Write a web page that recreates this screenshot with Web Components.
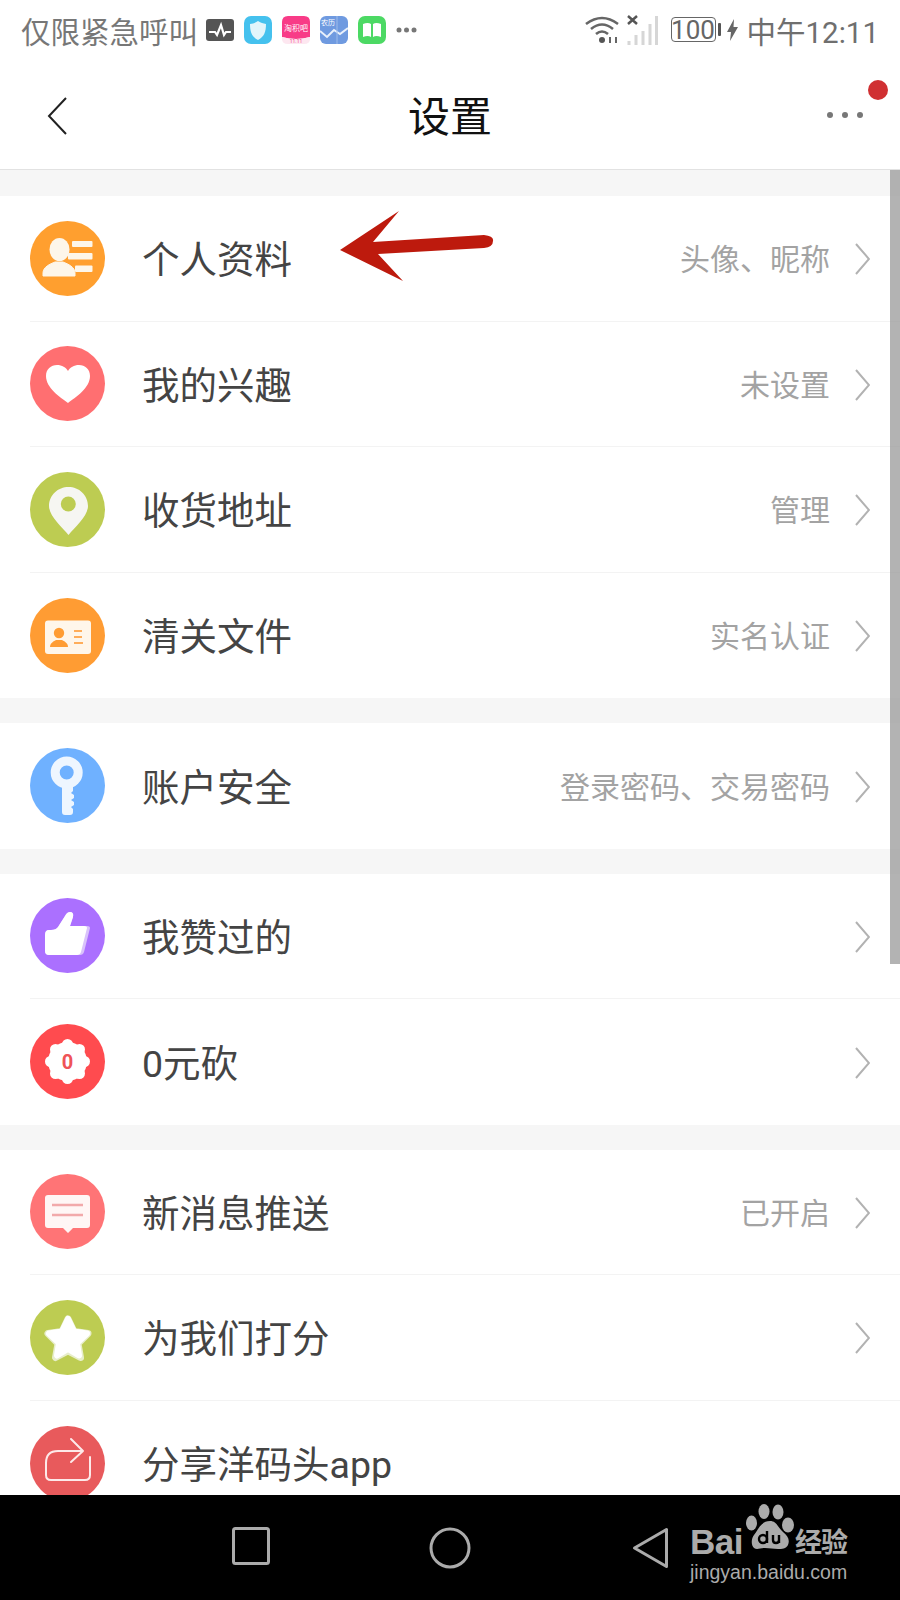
<!DOCTYPE html>
<html lang="zh">
<head>
<meta charset="utf-8">
<title>设置</title>
<style>
  html, body { margin: 0; padding: 0; background: #fff; }
  body { font-family: "Roboto", "Noto Sans CJK SC", sans-serif; }
</style>
</head>
<body>
<phone-app>
  <status-bar></status-bar>
  <nav-bar>设置</nav-bar>
  <settings-list>
    <settings-group>
      <settings-row icon="profile" note="头像、昵称">个人资料</settings-row>
      <settings-row icon="heart" note="未设置">我的兴趣</settings-row>
      <settings-row icon="pin" note="管理">收货地址</settings-row>
      <settings-row icon="card" note="实名认证">清关文件</settings-row>
    </settings-group>
    <settings-group>
      <settings-row icon="key" note="登录密码、交易密码">账户安全</settings-row>
    </settings-group>
    <settings-group>
      <settings-row icon="thumb">我赞过的</settings-row>
      <settings-row icon="zero">0元砍</settings-row>
    </settings-group>
    <settings-group>
      <settings-row icon="message" note="已开启">新消息推送</settings-row>
      <settings-row icon="star">为我们打分</settings-row>
      <settings-row icon="share" plain>分享洋码头app</settings-row>
    </settings-group>
  </settings-list>
  <bottom-nav></bottom-nav>
</phone-app>

<script>
const CJK = '"Roboto", "Noto Sans CJK SC", sans-serif';

// all icons are drawn on a 75x75 box, coords measured from the screenshot
const ICONS = {
  profile: { bg: '#ff9f2f', svg: `
    <ellipse cx="29.5" cy="28.5" rx="10" ry="11.5" fill="#fdf6ea"/>
    <path d="M13 55v-3c0-6 7-9 12-11h8c5 2 12 5 12 11v3z" fill="#fdf6ea" stroke="#fdf6ea" stroke-width="1" stroke-linejoin="round"/>
    <rect x="42" y="20" width="20.500" height="6" rx="1" fill="#fdf6ea"/>
    <rect x="38" y="32" width="24.500" height="6.500" rx="1" fill="#fdf6ea"/>
    <rect x="45" y="44.500" width="17.500" height="6.500" rx="1" fill="#fdf6ea"/>` },
  heart: { bg: '#ff6f71', svg: `
    <path d="M38 57C30 51 16 42 16 30c0-7 5-11 11-11 5 0 9 2.500 11 6 2-3.500 6-6 11-6 6 0 11 4 11 11 0 12-14 21-22 27z" fill="#fff"/>` },
  pin: { bg: '#bdcc52', svg: `
    <path d="M38.500 63C32 55 19 44 19 34c0-11 9-19 19.500-19S58 23 58 34c0 10-13 21-19.500 29z" fill="#f6f6f2"/>
    <circle cx="38.300" cy="32" r="7.500" fill="#bdcc52"/>` },
  card: { bg: '#ff9c33', svg: `
    <rect x="15" y="22.500" width="46" height="33.500" rx="3" fill="#fff6ea"/>
    <circle cx="29" cy="35" r="5.200" fill="#ff9c33"/>
    <path d="M20 49c0-4 4-6 6-7h6c2 1 6 3 6 7z" fill="#ff9c33"/>
    <path d="M44 33h8M44 39h8M44 45h9" stroke="#ffad5a" stroke-width="1.800"/>` },
  key: { bg: '#6fb1ff', svg: `
    <path d="M32 38v26q0 3 3 3h5q3 0 3-3v-3l-2-2 3-2v-3l-3-2 3-2v-3l-3-2 2-2v-7.500z" fill="#eef6ff"/>
    <circle cx="36.700" cy="24.500" r="11.500" fill="none" stroke="#eef6ff" stroke-width="9"/>` },
  thumb: { bg: '#ab70ff', svg: `
    <path d="M15 37v16q0 4 4 4h31q3 0 4-3l6-24q0-2-3-2H40l3-9q1-5-3-5-3 0-5 4l-7 11q-2 3-7 3h-2q-4 0-4 5z" fill="#d9c2fb"/>
    <path d="M15 37v16q0 4 4 4h28q3 0 4-3l6-24q0-2-3-2H40l3-9q1-5-3-5-3 0-5 4l-7 11q-2 3-7 3h-2q-4 0-4 5z" fill="#fff"/>` },
  zero: { bg: '#ff4b4f', svg: `
    <g fill="#fff"><circle cx="37.500" cy="37.500" r="19.500"/>
    <circle cx="37.500" cy="20.500" r="5.500"/><circle cx="37.500" cy="54.500" r="5.500"/><circle cx="20.500" cy="37.500" r="5.500"/><circle cx="54.500" cy="37.500" r="5.500"/>
    <circle cx="25.500" cy="25.500" r="5.500"/><circle cx="49.500" cy="25.500" r="5.500"/><circle cx="25.500" cy="49.500" r="5.500"/><circle cx="49.500" cy="49.500" r="5.500"/></g>
    <text x="37.500" y="44.500" text-anchor="middle" font-family="Roboto, sans-serif" font-weight="700" font-size="20" fill="#ef5357">0</text>` },
  message: { bg: '#ff7476', svg: `
    <path d="M18 21h39q3 0 3 3v27q0 3-3 3H43l-5 5-5-5H18q-3 0-3-3V24q0-3 3-3z" fill="#fff6f5"/>
    <path d="M22 31h31M22 41h31" stroke="#f2a9aa" stroke-width="2.500"/>` },
  star: { bg: '#bdcc52', svg: `
    <path d="M38 19l6 12.500 14 2-10 10 2.500 14L38 51l-12.500 6.500L28 43.500l-10-10 14-2z" fill="#e8eecb" stroke="#e8eecb" stroke-width="7" stroke-linejoin="round"/>
    <path d="M38 19l6 12.500 13 2-10 9.500 2 12.500L38 49l-11 6.500 2-12.500-10-9.500 13-2z" fill="#fff" stroke="#fff" stroke-width="6" stroke-linejoin="round"/>` },
  share: { bg: '#e85a5c', svg: `
    <path d="M41 13l12 12-12 11M53 25H28q-12 0-12 12v12q0 5 5 5h34q5 0 5-5V31" fill="none" stroke="#fde9e9" stroke-width="2" stroke-linecap="round" stroke-linejoin="round"/>` }
};

class PhoneApp extends HTMLElement {
  constructor() {
    super();
    this.attachShadow({ mode: 'open' }).innerHTML = `
      <style>
        :host { display: flex; flex-direction: column; width: 900px; height: 1600px; position: relative; overflow: hidden; background: #fff; font-family: ${CJK}; }
        .arrow { position: absolute; left: 330px; top: 205px; }
      </style>
      <slot></slot>
      <svg class="arrow" width="170" height="85" viewBox="330 205 170 85">
        <path d="M340 250L399 211 373 242 484 235Q494 236 493 241 493 247 484 248L378 254 403 281z" fill="#bd1a0d"/>
      </svg>`;
  }
}

class StatusBar extends HTMLElement {
  constructor() {
    super();
    this.attachShadow({ mode: 'open' }).innerHTML = `
      <style>
        :host { display: flex; align-items: center; height: 60px; padding: 0 21px 1px 21px; color: #777; font-size: 29.500px; flex: none; box-sizing: border-box; }
        .left, .right { display: flex; align-items: center; }
        .right { margin-left: auto; }
        svg { display: block; flex: none; }
        .gap { margin-left: 10px; }
        .time { font-size: 29.500px; margin-left: 9px; color: #6f6f6f; }
        .batt { font-size: 26px; color: #666; line-height: 1; }
      </style>
      <div class="left">
        <span>仅限紧急呼叫</span>
        <svg style="margin-left:8px" width="28" height="22" viewBox="0 0 28 22"><rect width="28" height="22" rx="3" fill="#555"/><path d="M3 13h6l2 3 4-10 3 10 2-3h5" fill="none" stroke="#fff" stroke-width="2.200"/></svg>
        <svg class="gap" width="28" height="28" viewBox="0 0 28 28"><rect width="28" height="28" rx="7" fill="#45c1ee"/><path d="M14 5c3 2 5 2.500 8 3 0 8-2 13-8 16-6-3-8-8-8-16 3-.5 5-1 8-3z" fill="#e2f5fb"/></svg>
        <svg class="gap" width="28" height="28" viewBox="0 0 28 28"><path d="M6 0h16q6 0 6 6v15q-14 4-28 0V6q0-6 6-6z" fill="#f83b87"/><path d="M0 21q14 4 28 0v2q0 5-6 5H6q-6 0-6-5z" fill="#fde7f0"/><text x="14" y="15" text-anchor="middle" font-size="8" font-family="Noto Sans CJK SC, sans-serif" fill="#fff">淘积吧</text><text x="14" y="27" text-anchor="middle" font-size="5" font-family="Roboto, sans-serif" fill="#f83b87">11.11</text></svg>
        <svg class="gap" width="28" height="28" viewBox="0 0 28 28"><rect width="28" height="28" rx="6" fill="#6f9ae0"/><path d="M0 15l7 6 7-7 6 4 8-6" fill="none" stroke="#e9f0fb" stroke-width="2"/><path d="M17 0v28" stroke="#9fbcea" stroke-width="1"/><text x="8" y="9" text-anchor="middle" font-size="7" font-family="Noto Sans CJK SC, sans-serif" fill="#fff">农历</text></svg>
        <svg class="gap" width="28" height="28" viewBox="0 0 28 28"><rect width="28" height="28" rx="7" fill="#4cd964"/><path d="M5 8q5-2 8 0v13q-3-2-8 0zM15 8q3-2 8 0v13q-5-2-8 0z" fill="#fff"/></svg>
        <svg style="margin-left:10px" width="21" height="6" viewBox="0 0 21 6"><circle cx="3" cy="3" r="2.500" fill="#777"/><circle cx="10.500" cy="3" r="2.500" fill="#777"/><circle cx="18" cy="3" r="2.500" fill="#777"/></svg>
      </div>
      <div class="right">
        <svg width="34" height="29" viewBox="0 0 34 29"><g fill="none" stroke="#666" stroke-width="2.600"><path d="M1 9Q17-3 33 9"/><path d="M6 14Q17 5 28 14"/><path d="M11 19Q17 14 23 19"/></g><circle cx="17" cy="25" r="3" fill="#555"/><path d="M25 22v6M31 22v6" stroke="#666" stroke-width="2"/></svg>
        <svg style="margin-left:8px" width="31" height="30" viewBox="0 0 31 30"><path d="M1 1l9 8M10 1L1 9" stroke="#555" stroke-width="2.500"/><g stroke="#d6d6d6" stroke-width="3"><path d="M2 30v-4M9 30v-10M16 30v-14M23 30v-21M29.500 30V1"/></g></svg>
        <span class="batt" style="margin-left:13px;display:flex;align-items:center;justify-content:center;box-sizing:border-box;width:45px;height:25px;border:1.500px solid #666;border-radius:4px">100</span>
        <svg style="margin-left:2px" width="3" height="13" viewBox="0 0 3 13"><rect width="3" height="13" rx="1" fill="#555"/></svg>
        <svg style="margin-left:6px" width="11" height="22" viewBox="0 0 11 22"><path d="M7 0L0 13h4l-1 9 8-14H6.500z" fill="#666"/></svg>
        <span class="time">中午12:11</span>
      </div>`;
  }
}

class NavBar extends HTMLElement {
  constructor() {
    super();
    this.attachShadow({ mode: 'open' }).innerHTML = `
      <style>
        :host { display: grid; grid-template-columns: 120px 1fr 120px; align-items: center; height: 110px; box-sizing: border-box; border-bottom: 1px solid #e2e2e2; flex: none; position: relative; }
        .back { margin-left: 46px; display: block; margin-top: 2px; }
        .title { text-align: center; font-size: 42px; color: #111; line-height: 1; margin-top: 6px; }
        .more { justify-self: end; margin-right: 36px; margin-top: 0; display: block; }
        .dot { position: absolute; left: 868px; top: 20px; width: 20px; height: 20px; border-radius: 50%; background: #d03032; }
      </style>
      <svg class="back" width="22" height="40" viewBox="0 0 22 40"><path d="M20 2L3 20l17 18" fill="none" stroke="#222" stroke-width="2"/></svg>
      <div class="title"><slot></slot></div>
      <svg class="more" width="38" height="8" viewBox="0 0 38 8"><circle cx="4" cy="4" r="3" fill="#777"/><circle cx="19" cy="4" r="3" fill="#777"/><circle cx="34" cy="4" r="3" fill="#777"/></svg>
      <div class="dot"></div>`;
  }
}

class SettingsList extends HTMLElement {
  constructor() {
    super();
    this.attachShadow({ mode: 'open' }).innerHTML = `
      <style>
        :host { display: flex; flex-direction: column; gap: 25px; flex: 1; min-height: 0; overflow: hidden; padding-top: 26px; background: #f6f6f6; position: relative; }
        .thumb { position: absolute; right: 0; top: 0; width: 10px; height: 794px; background: rgba(150,150,150,.72); }
      </style>
      <slot></slot>
      <div class="thumb"></div>`;
  }
}

class SettingsGroup extends HTMLElement {
  constructor() {
    super();
    this.attachShadow({ mode: 'open' }).innerHTML = `
      <style>:host { display: block; background: #fff; flex: none; }</style>
      <slot></slot>`;
  }
}

class SettingsRow extends HTMLElement {
  constructor() {
    super();
    const icon = ICONS[this.getAttribute('icon')];
    const note = this.getAttribute('note') || '';
    const chev = this.hasAttribute('plain') ? '' : `<svg class="chev" width="15" height="32" viewBox="0 0 15 32"><path d="M1 1l13 15L1 31" fill="none" stroke="#b2b2b2" stroke-width="2"/></svg>`;
    this.attachShadow({ mode: 'open' }).innerHTML = `
      <style>
        :host { display: block; margin-left: 30px; }
        :host(:not(:last-child)) .row { border-bottom: 1px solid #f3f3f3; }
        .row { display: flex; align-items: center; box-sizing: border-box; height: 125.500px; padding-right: 30px; }
        .icon { width: 75px; height: 75px; flex: none; display: block; }
        .label { margin: 5px 0 0 37px; font-size: 37.500px; color: #444; line-height: 1; }
        .note { margin: 4px 0 0 auto; font-size: 30px; color: #a3a3a3; line-height: 1; }
        .chev { margin: 2px 0 0 25px; flex: none; display: block; }
      </style>
      <div class="row">
        <svg class="icon" viewBox="0 0 75 75"><circle cx="37.500" cy="37.500" r="37.500" fill="${icon.bg}"/>${icon.svg}</svg>
        <span class="label"><slot></slot></span>
        <span class="note">${note}</span>
        ${chev}
      </div>`;
  }
}

class BottomNav extends HTMLElement {
  constructor() {
    super();
    this.attachShadow({ mode: 'open' }).innerHTML = `
      <style>
        :host { display: flex; align-items: center; height: 105px; background: #000; flex: none; position: relative; box-sizing: border-box; color: #ababab; }
        svg { display: block; }
        .mark { position: absolute; left: 690px; top: 9px; width: 170px; height: 90px; }
        .mark span { position: absolute; white-space: nowrap; line-height: 1; }
        .bai { left: 0; top: 20px; font: 700 35px "Liberation Sans", sans-serif; letter-spacing: -.5px; }
        .jy { left: 105px; top: 23px; font: 700 27px "Noto Sans CJK SC", sans-serif; letter-spacing: -1px; }
        .url { left: 0; top: 59px; font: 19.500px "Liberation Sans", sans-serif; }
        .paw { position: absolute; left: 56px; top: 0; }
      </style>
      <svg style="margin:-3px 0 0 232px" width="38" height="38" viewBox="0 0 38 38"><rect x="1.500" y="1.500" width="35" height="35" rx="2" fill="none" stroke="#ababab" stroke-width="3"/></svg>
      <svg style="position:absolute;left:429px;top:32px" width="42" height="42" viewBox="0 0 42 42"><circle cx="21" cy="21" r="19" fill="none" stroke="#ababab" stroke-width="3"/></svg>
      <svg style="position:absolute;left:632px;top:32px" width="37" height="42" viewBox="0 0 37 42"><path d="M34.500 2.500v37L2.500 21z" fill="none" stroke="#ababab" stroke-width="3" stroke-linejoin="round"/></svg>
      <div class="mark">
        <span class="bai">Bai</span>
        <svg class="paw" width="50" height="52" viewBox="0 0 50 52" fill="#ababab">
          <ellipse cx="5.500" cy="19" rx="5.500" ry="7.500"/><ellipse cx="18" cy="7.500" rx="5.500" ry="7.500"/><ellipse cx="32" cy="8" rx="5.500" ry="7.500"/><ellipse cx="42" cy="21" rx="6" ry="7.500"/>
          <path d="M24 17c7 0 8 7 13 11 5 4 7 8 5 13-2 4-6 4-10 4-5 0-8-1-13-1-5 0-8 2-11 0-3-3-3-9 0-13 4-5 7-14 16-14z"/>
          <g fill="none" stroke="#000" stroke-width="2.400"><circle cx="17" cy="35" r="4"/><path d="M21 27v12M27 31v5q0 3 3 3t3-3v-5M33 31v8"/></g>
        </svg>
        <span class="jy">经验</span>
        <span class="url">jingyan.baidu.com</span>
      </div>`;
  }
}

customElements.define('phone-app', PhoneApp);
customElements.define('status-bar', StatusBar);
customElements.define('nav-bar', NavBar);
customElements.define('settings-list', SettingsList);
customElements.define('settings-group', SettingsGroup);
customElements.define('settings-row', SettingsRow);
customElements.define('bottom-nav', BottomNav);
</script>
</body>
</html>
